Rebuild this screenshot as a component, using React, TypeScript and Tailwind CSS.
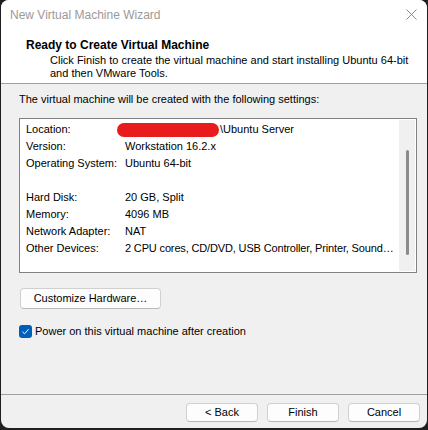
import React from "react";

const font = { fontFamily: '"Liberation Sans", Arial, sans-serif' };

function WinButton({ children, className = "" }: { children: React.ReactNode; className?: string }) {
  return (
    <div
      className={
        "flex items-center justify-center whitespace-nowrap rounded-[4px] border border-[#d0d0d0] border-b-[#b8b8b8] bg-[#fdfdfd] text-[11px] text-black " +
        className
      }
    >
      {children}
    </div>
  );
}

const rows: { label: string; value: React.ReactNode }[] = [
  {
    label: "Location:",
    value: (
      <span className="flex items-center">
        <span className="-ml-[8px] mr-[1px] inline-block h-[14px] w-[102px] rounded-full bg-[#e81c1c]" />
        <span>\Ubuntu Server</span>
      </span>
    ),
  },
  { label: "Version:", value: "Workstation 16.2.x" },
  { label: "Operating System:", value: "Ubuntu 64-bit" },
  { label: "", value: "" },
  { label: "Hard Disk:", value: "20 GB, Split" },
  { label: "Memory:", value: "4096 MB" },
  { label: "Network Adapter:", value: "NAT" },
  { label: "Other Devices:", value: <span className="tracking-[-0.15px]">2 CPU cores, CD/DVD, USB Controller, Printer, Sound…</span> },
];

export default function App() {
  return (
    <div className="h-[430px] w-[428px] bg-[#1f1f1f] pl-[1px]" style={font}>
      <div className="flex h-[428px] w-[426px] flex-col overflow-hidden rounded-[8px] bg-[#f0f0f0] text-[11px] text-black">
        {/* Title bar */}
        <div className="flex h-[30px] items-center justify-between bg-white pl-[9px] pr-[10px]">
          <span className="whitespace-nowrap text-[12px] text-[#9a9a9a]">New Virtual Machine Wizard</span>
          <svg width="11" height="11" viewBox="0 0 11 11" className="mt-[-1px]">
            <path d="M0.5 0.5 L10.5 10.5 M10.5 0.5 L0.5 10.5" stroke="#8a8a8a" strokeWidth="1" />
          </svg>
        </div>
        {/* Header */}
        <div className="h-[54px] border-b border-[#a0a0a0] bg-white pt-[8px]">
          <div className="whitespace-nowrap pl-[25px] text-[12px] font-bold leading-[14px]">Ready to Create Virtual Machine</div>
          <div className="mt-[2px] whitespace-nowrap pl-[49px] text-[11px] leading-[13px]">
            Click Finish to create the virtual machine and start installing Ubuntu 64-bit
            <br />
            and then VMware Tools.
          </div>
        </div>
        {/* Body */}
        <div className="flex flex-1 flex-col px-[18px] pt-[8px]">
          <div className="whitespace-nowrap leading-[14px]">The virtual machine will be created with the following settings:</div>
          <div className="mt-[12px] flex h-[155px] w-[398px] border border-[#828282] bg-white">
            <div className="flex-1 pl-[6px] pt-[2px]">
              {rows.map((r, i) => (
                <div key={i} className="flex h-[17px] items-center whitespace-nowrap">
                  <span className="w-[99px] shrink-0">{r.label}</span>
                  <span>{r.value}</span>
                </div>
              ))}
            </div>
            <div className="my-[1px] mr-[1px] flex w-[16px] justify-center bg-[#f0f0f0] pt-[30px]">
              <div className="h-[105px] w-[3px] rounded-full bg-[#8b8b8b]" />
            </div>
          </div>
          <WinButton className="ml-[1px] mt-[15px] h-[21px] w-[141px]">Customize Hardware…</WinButton>
          <div className="mt-[15px] flex items-center">
            <div className="flex h-[13px] w-[13px] items-center justify-center rounded-[3px] bg-[#005fb8]">
              <svg width="9" height="9" viewBox="0 0 9 9">
                <path d="M1.5 4.8 L3.6 6.8 L7.6 2.2" stroke="white" strokeWidth="1" fill="none" />
              </svg>
            </div>
            <span className="ml-[3px] whitespace-nowrap leading-[14px]">Power on this virtual machine after creation</span>
          </div>
        </div>
        {/* Footer */}
        <div className="flex h-[34px] items-start justify-end gap-[9px] border-t border-[#a0a0a0] pr-[7px] pt-[8px]">
          <WinButton className="h-[19px] w-[72px]">&lt; Back</WinButton>
          <WinButton className="h-[19px] w-[72px]">Finish</WinButton>
          <WinButton className="h-[19px] w-[72px]">Cancel</WinButton>
        </div>
      </div>
    </div>
  );
}
